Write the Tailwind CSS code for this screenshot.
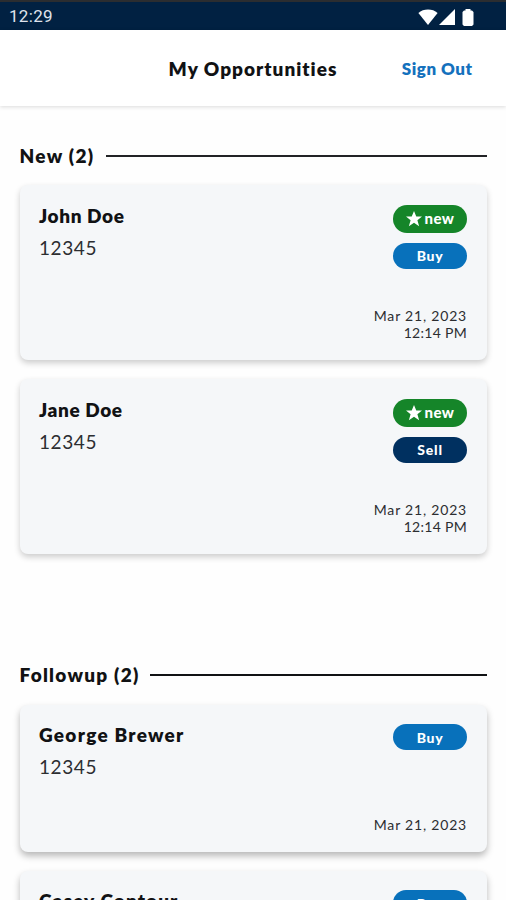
<!DOCTYPE html>
<html lang="en">
<head>
    <meta charset="UTF-8">
    <meta name="viewport" content="width=device-width, initial-scale=1.0">
    <title>My Opportunities</title>
    <script src="https://cdn.jsdelivr.net/npm/@tailwindcss/browser@4"></script>
</head>
<body class="h-[900px] overflow-hidden bg-[#fefefe] font-['Lato',sans-serif] text-[#111214]">
    <!-- Status bar -->
    <div class="flex h-[30px] items-center justify-between border-t-2 border-[#2b2d30] bg-[#012142] pl-[9px] pr-8 pt-[2px]">
        <span class="font-['Roboto',sans-serif] text-[17px] tracking-[0.3px] text-[#dfe3ec]">12:29</span>
        <div class="flex items-center text-white">
            <svg class="h-4 w-[20px]" viewBox="0 0 20 16" fill="currentColor"><path d="M10 16 .4 3.900C3 1.600 6.300.5 10 .5s7 1.100 9.600 3.400z"/></svg>
            <svg class="ml-[1px] h-4 w-4" viewBox="0 0 16 16" fill="currentColor"><path d="M16 0v16H0z"/></svg>
            <svg class="ml-[7px] h-[17px] w-[12px]" viewBox="0 0 12 17" fill="currentColor"><path d="M3.500 0h5v1.500h1.500L11.500 3v12.500L10 17H2L.5 15.500V3L2 1.500h1.500z"/></svg>
        </div>
    </div>

    <!-- Header -->
    <header class="grid h-[76px] grid-cols-3 items-center bg-white pt-[2px] shadow-[0_1px_4px_rgba(0,0,0,0.14)]">
        <h1 class="col-start-2 justify-self-center whitespace-nowrap text-[19px] font-extrabold tracking-[1px]">My Opportunities</h1>
        <a href="#" class="justify-self-end whitespace-nowrap pr-[33.500px] text-[17px] font-extrabold tracking-[0.5px] text-[#1471bd]">Sign Out</a>
    </header>

    <main class="px-[19.500px]">
        <!-- New -->
        <section class="pt-[38px]">
            <div class="flex h-6 items-center">
                <h2 class="w-[76px] whitespace-nowrap text-[19px] font-extrabold tracking-[1.3px]">New (2)</h2>
                <div class="ml-[10px] h-[2px] grow bg-[#222326]"></div>
            </div>
            <article class="mt-[17px] flex h-[175px] justify-between rounded-lg bg-[#f5f7f9] p-[19.500px] shadow-[0_3px_6px_rgba(0,0,0,0.2)]">
                <div class="-mt-px">
                    <h3 class="text-[19px] font-extrabold leading-6 tracking-[0.6px]">John Doe</h3>
                    <p class="mt-2 text-[19px] leading-6 tracking-[0.6px] text-[#2c2e31]">12345</p>
                </div>
                <div class="flex flex-col items-end">
                    <span class="flex h-[28px] w-[74px] items-center justify-center gap-[3px] rounded-full bg-[#158529] text-[15px] font-black tracking-[0.4px] text-white">
                        <svg class="h-4 w-4" viewBox="0 0 24 24" fill="currentColor"><path d="m12 0 3.400 8.200h8.600l-6.900 5.500 2.600 9-7.700-5.200-7.700 5.200 2.600-9L0 8.200h8.600z"/></svg>
                        new
                    </span>
                    <span class="mt-[10px] flex h-[26px] w-[74px] items-center justify-center rounded-full bg-[#0871bb] text-[14px] font-black tracking-[0.7px] text-white">Buy</span>
                    <p class="mt-auto text-right text-[14px] leading-[17px] tracking-[0.8px] text-[#2c2e31]">Mar 21, 2023<br><span class="tracking-[0.3px]">12:14 PM</span></p>
                </div>
            </article>
            <article class="mt-[19px] flex h-[175px] justify-between rounded-lg bg-[#f5f7f9] p-[19.500px] shadow-[0_3px_6px_rgba(0,0,0,0.2)]">
                <div class="-mt-px">
                    <h3 class="text-[19px] font-extrabold leading-6 tracking-[0.6px]">Jane Doe</h3>
                    <p class="mt-2 text-[19px] leading-6 tracking-[0.6px] text-[#2c2e31]">12345</p>
                </div>
                <div class="flex flex-col items-end">
                    <span class="flex h-[28px] w-[74px] items-center justify-center gap-[3px] rounded-full bg-[#158529] text-[15px] font-black tracking-[0.4px] text-white">
                        <svg class="h-4 w-4" viewBox="0 0 24 24" fill="currentColor"><path d="m12 0 3.400 8.200h8.600l-6.900 5.500 2.600 9-7.700-5.200-7.700 5.200 2.600-9L0 8.200h8.600z"/></svg>
                        new
                    </span>
                    <span class="mt-[10px] flex h-[26px] w-[74px] items-center justify-center rounded-full bg-[#003060] text-[14px] font-black tracking-[0.8px] text-white">Sell</span>
                    <p class="mt-auto text-right text-[14px] leading-[17px] tracking-[0.8px] text-[#2c2e31]">Mar 21, 2023<br><span class="tracking-[0.3px]">12:14 PM</span></p>
                </div>
            </article>
        </section>

        <!-- Followup -->
        <section class="pt-[109px]">
            <div class="flex h-6 items-center">
                <h2 class="w-[120px] whitespace-nowrap text-[19px] font-extrabold tracking-[1.250px]">Followup (2)</h2>
                <div class="ml-[10px] h-[2px] grow bg-[#111214]"></div>
            </div>
            <article class="mt-[18px] flex h-[147px] justify-between rounded-lg bg-[#f5f7f9] px-[19.500px] py-[19px] shadow-[0_4px_7px_rgba(0,0,0,0.28)]">
                <div class="-mt-px">
                    <h3 class="text-[19px] font-extrabold leading-6 tracking-[1.250px]">George Brewer</h3>
                    <p class="mt-2 text-[19px] leading-6 tracking-[0.6px] text-[#2c2e31]">12345</p>
                </div>
                <div class="flex flex-col items-end">
                    <span class="flex h-[26px] w-[74px] items-center justify-center rounded-full bg-[#0871bb] text-[14px] font-black tracking-[0.7px] text-white">Buy</span>
                    <p class="mt-auto text-right text-[14px] leading-[17px] tracking-[0.8px] text-[#2c2e31]">Mar 21, 2023</p>
                </div>
            </article>
            <article class="mt-[19px] flex h-[147px] justify-between rounded-lg bg-[#f5f7f9] px-[19.500px] py-[19px] shadow-[0_4px_7px_rgba(0,0,0,0.28)]">
                <div class="-mt-px">
                    <h3 class="text-[19px] font-extrabold leading-6 tracking-[1.100px]">Casey Contour</h3>
                    <p class="mt-2 text-[19px] leading-6 tracking-[0.6px] text-[#2c2e31]">12345</p>
                </div>
                <div class="flex flex-col items-end">
                    <span class="flex h-[26px] w-[74px] items-center justify-center rounded-full bg-[#0871bb] text-[14px] font-black tracking-[0.7px] text-white">Buy</span>
                    <p class="mt-auto text-right text-[14px] leading-[17px] tracking-[0.8px] text-[#2c2e31]">Mar 21, 2023</p>
                </div>
            </article>
        </section>
    </main>
</body>
</html>
